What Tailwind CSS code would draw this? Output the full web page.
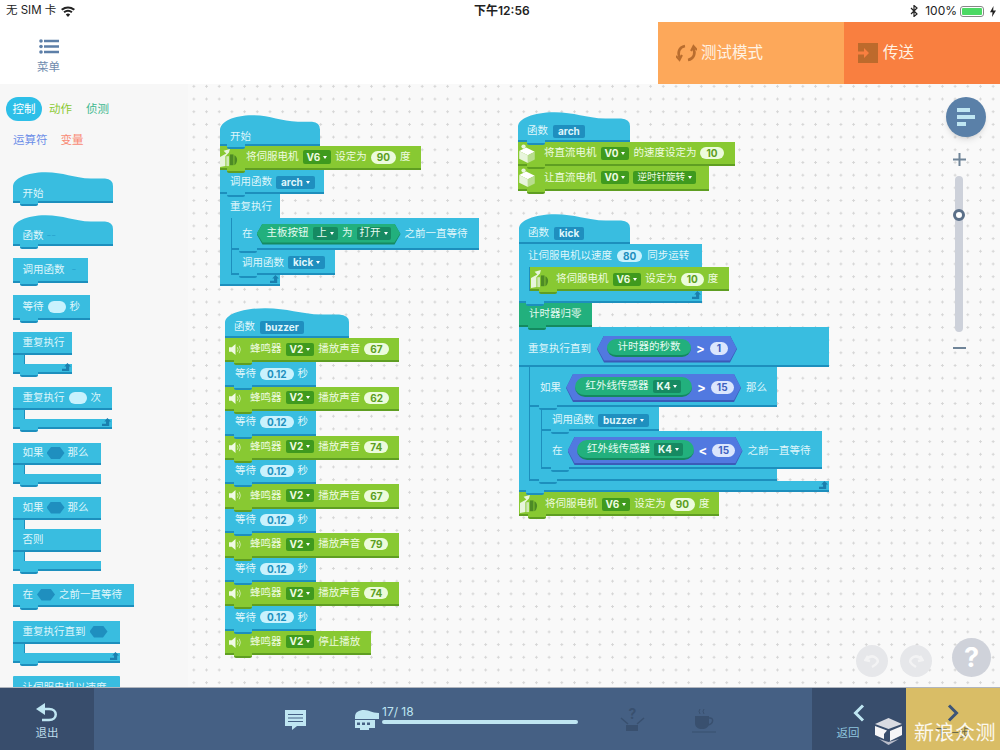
<!DOCTYPE html>
<html lang="zh-CN">
<head>
  <meta charset="UTF-8">
  <meta name="viewport" content="width=device-width, initial-scale=1.0">
  <script src="https://cdn.jsdelivr.net/npm/@tailwindcss/browser@4"></script>
  <title>积木编程</title>
</head>
<body class="relative flex h-[750px] w-[1000px] flex-col overflow-hidden bg-white font-['Inter','Noto_Sans_CJK_SC',sans-serif]">

  <!-- icon symbols -->
  <svg class="absolute h-0 w-0">
    <symbol id="hat" viewBox="0 0 100 30" preserveAspectRatio="none"><path d="M0 30V15C0 6 14 .5 32 .2C50 0 60 6 78 6.500H92Q100 7 100 14V30Z" fill="#39bde0"/></symbol>
    <symbol id="servo" viewBox="0 0 20 22"><path d="M0 10L7 6 4 3 11 1 10 5 6 9V20L0 21Z" fill="#e8f5dc"/><path d="M7 9h3v11H7z" fill="#cfe8b8"/><path d="M11 7h4v12h-4z" fill="#4d8a25"/><path d="M16 8c2 1 3 3 3 5s-1 5-3 6z" fill="#4d8a25"/></symbol>
    <symbol id="dc" viewBox="0 0 18 22"><circle cx="5" cy="3" r="2.500" fill="#e8f5dc"/><path d="M0 8L8 4 18 9 10 13Z" fill="#fff"/><path d="M0 8L10 13V22L0 17Z" fill="#e8f5dc"/><path d="M10 13L18 9V18L10 22Z" fill="#b8dd8e"/></symbol>
    <symbol id="speaker" viewBox="0 0 14 14"><path d="M0 4.500H3L7 1V13L3 9.500H0Z" fill="#f0fae4"/><path d="M9 4.500Q10.500 7 9 9.500M11 3Q13.500 7 11 11" fill="none" stroke="#d4edb6" stroke-width="1"/></symbol>
    <symbol id="loop" viewBox="0 0 10 10"><path d="M6 0L10 4H8V9H0V6.500H4.500V4H2.500Z" fill="#1a7fae"/></symbol>
  </svg>

  <!-- status bar -->
  <div class="relative flex h-[22px] shrink-0 items-center justify-between pl-[6px] pr-[4px] text-[12px] text-[#222]">
    <div class="flex items-center gap-[5px]">
      <span class="text-[11.500px]">无 SIM 卡</span>
      <svg width="14" height="11" viewBox="0 0 14 11"><path d="M7 11L4.800 8.400Q7 6.800 9.200 8.400ZM3.700 7.100L2.400 5.600Q7 2.100 11.600 5.600L10.300 7.100Q7 4.600 3.700 7.100ZM1.400 4.400L0 2.900Q7-2 14 2.900L12.600 4.400Q7 .6 1.400 4.400Z" fill="#222"/></svg>
    </div>
    <span class="absolute left-[474px] text-[12px] font-semibold">下午12:56</span>
    <div class="flex items-center gap-[3px]">
      <svg width="8" height="12" viewBox="0 0 8 12"><path d="M1 3L7 9 4 11.500V.5L7 3 1 9" fill="none" stroke="#222" stroke-width="1.200"/></svg>
      <span class="ml-[4px]">100%</span>
      <div class="flex h-[11px] w-[24px] rounded-[3px] border border-[#888] p-[1px]"><div class="flex-1 rounded-[1px] bg-[#4cd964]"></div></div>
      <svg width="6" height="11" viewBox="0 0 6 11" class="ml-[3px]"><path d="M3.500 0L0 6.200H2.500L2 11 6 4.500H3.200Z" fill="#222"/></svg>
    </div>
  </div>

  <!-- top bar -->
  <div class="flex h-[62px] shrink-0">
    <div class="flex w-[97px] flex-col items-center pt-[17px]">
      <svg width="20" height="15" viewBox="0 0 20 15" fill="#5d7fa8"><circle cx="2" cy="2" r="1.800"/><circle cx="2" cy="7.500" r="1.800"/><circle cx="2" cy="13" r="1.800"/><path d="M5 .8h15v2.400H5zM5 6.300h15v2.400H5zM5 11.800h15v2.400H5z"/></svg>
      <span class="mt-[5px] text-[11.500px] leading-[16px] text-[#6f8cae]">菜单</span>
    </div>
    <div class="ml-auto flex w-[186px] items-center gap-[4px] bg-[#fda85a] pl-[18px] text-[15.500px] text-[#fff3e4]">
      <svg width="21" height="18" viewBox="0 0 21 18" fill="none" stroke="#b96d2e" stroke-width="2.600"><path d="M4 14C1 9 3 3 9 2"/><path d="M6 11L3.500 16 0 12" stroke-width="2"/><path d="M17 4C20 9 18 15 12 16"/><path d="M15 7L17.500 2 21 6" stroke-width="2"/></svg>
      <span>测试模式</span>
    </div>
    <div class="flex w-[156px] items-center gap-[5px] bg-[#f97f40] pl-[14px] text-[15.500px] text-[#fff3e4]">
      <svg width="20" height="20" viewBox="0 0 20 20"><path d="M0 0h20v20H0z" fill="#bd6a2c"/><path d="M0 8.500h6V5l5 5-5 5v-3.500H0z" fill="#f97f40"/></svg>
      <span>传送</span>
    </div>
  </div>

  <!-- middle -->
  <div class="flex min-h-0 flex-1">

    <!-- palette -->
    <div class="h-full w-[188px] shrink-0 overflow-hidden bg-[#f7f7f7]">
      <div class="flex gap-[7px] pl-[6px] pt-[13px] text-[11.500px] leading-[24px]">
        <span class="h-[24px] w-[36px] rounded-full bg-[#2dbfe8] text-center text-white">控制</span>
        <span class="text-[#8bc933]">动作</span>
        <span class="ml-[7px] text-[#3cb88e]">侦测</span>
      </div>
      <div class="mt-[7px] flex gap-[13px] pl-[13px] text-[11.500px] leading-[24px]">
        <span class="text-[#6c8ee8]">运算符</span>
        <span class="text-[#f98a75]">变量</span>
      </div>

      <div class="mt-[20px] flex flex-col gap-[12px] pl-[12.500px] text-[10.500px] text-[#dff6fb]">
        <div class="relative h-[31px] w-[100px]">
          <svg class="absolute inset-0 h-[30px] w-full"><use href="#hat"/></svg>
          <div class="absolute inset-x-0 bottom-0 flex h-[20px] items-center border-b-2 border-[#1d8fbd] pl-[10px] pt-[3px]">开始<i class="absolute left-[7px] top-full z-10 h-[5px] w-[18px] rounded-b-[2px] border-b-2 border-[#1d8fbd] bg-[#39bde0]"></i></div>
        </div>
        <div class="relative h-[31px] w-[100px]">
          <svg class="absolute inset-0 h-[30px] w-full"><use href="#hat"/></svg>
          <div class="absolute inset-x-0 bottom-0 flex h-[20px] items-center gap-[3px] border-b-2 border-[#1d8fbd] pl-[10px] pt-[2px]">函数<span class="text-[#2aa5cf]">--</span><i class="absolute left-[7px] top-full z-10 h-[5px] w-[18px] rounded-b-[2px] border-b-2 border-[#1d8fbd] bg-[#39bde0]"></i></div>
        </div>
        <div class="relative flex h-[25px] w-[75.500px] items-center gap-[7px] border-b-2 border-[#1d8fbd] bg-[#39bde0] pl-[10px]">调用函数<span class="text-[#2aa5cf]">-</span><i class="absolute left-[7px] top-full z-10 h-[5px] w-[18px] rounded-b-[2px] border-b-2 border-[#1d8fbd] bg-[#39bde0]"></i></div>
        <div class="relative flex h-[25px] w-[77px] items-center gap-[4px] border-b-2 border-[#1d8fbd] bg-[#39bde0] pl-[10px]">等待<i class="h-[12px] w-[18px] rounded-full bg-[#c9f2fd]"></i>秒<i class="absolute left-[7px] top-full z-10 h-[5px] w-[18px] rounded-b-[2px] border-b-2 border-[#1d8fbd] bg-[#39bde0]"></i></div>

        <div class="flex flex-col">
          <div class="relative flex h-[23px] w-[59.500px] items-center border-b-2 border-[#1d8fbd] bg-[#39bde0] pl-[10px]">重复执行</div>
          <div class="h-[9px] w-[12px] border-r border-[#1d8fbd] bg-[#39bde0]"></div>
          <div class="relative h-[10px] w-[59.500px] border-b-2 border-[#1d8fbd] bg-[#39bde0]"><svg class="absolute right-[1px] top-[-1px] h-[9px] w-[9px]"><use href="#loop"/></svg><i class="absolute left-[7px] top-full z-10 h-[5px] w-[18px] rounded-b-[2px] border-b-2 border-[#1d8fbd] bg-[#39bde0]"></i></div>
        </div>
        <div class="mt-[1px] flex flex-col">
          <div class="relative flex h-[23px] w-[99px] items-center gap-[4px] border-b-2 border-[#1d8fbd] bg-[#39bde0] pl-[10px]">重复执行<i class="h-[12px] w-[18px] rounded-full bg-[#c9f2fd]"></i>次</div>
          <div class="h-[9px] w-[12px] border-r border-[#1d8fbd] bg-[#39bde0]"></div>
          <div class="relative h-[10px] w-[99px] border-b-2 border-[#1d8fbd] bg-[#39bde0]"><svg class="absolute right-[1px] top-[-1px] h-[9px] w-[9px]"><use href="#loop"/></svg><i class="absolute left-[7px] top-full z-10 h-[5px] w-[18px] rounded-b-[2px] border-b-2 border-[#1d8fbd] bg-[#39bde0]"></i></div>
        </div>
        <div class="mt-[2px] flex flex-col">
          <div class="relative flex h-[22px] w-[88px] items-center gap-[3px] border-b-2 border-[#1d8fbd] bg-[#39bde0] pl-[10px]">如果<i class="h-[12px] w-[18px] bg-[#1f8fbf] [clip-path:polygon(25%_0,75%_0,100%_50%,75%_100%,25%_100%,0_50%)]"></i>那么</div>
          <div class="h-[9px] w-[12px] border-r border-[#1d8fbd] bg-[#39bde0]"></div>
          <div class="relative h-[10px] w-[88px] border-b-2 border-[#1d8fbd] bg-[#39bde0]"><i class="absolute left-[7px] top-full z-10 h-[5px] w-[18px] rounded-b-[2px] border-b-2 border-[#1d8fbd] bg-[#39bde0]"></i></div>
        </div>
        <div class="mt-[1px] flex flex-col">
          <div class="relative flex h-[23px] w-[88px] items-center gap-[3px] border-b-2 border-[#1d8fbd] bg-[#39bde0] pl-[10px]">如果<i class="h-[12px] w-[18px] bg-[#1f8fbf] [clip-path:polygon(25%_0,75%_0,100%_50%,75%_100%,25%_100%,0_50%)]"></i>那么</div>
          <div class="h-[9px] w-[12px] border-r border-[#1d8fbd] bg-[#39bde0]"></div>
          <div class="flex h-[23px] w-[88px] items-center border-b-2 border-[#1d8fbd] bg-[#39bde0] pl-[10px]">否则</div>
          <div class="h-[9px] w-[12px] border-r border-[#1d8fbd] bg-[#39bde0]"></div>
          <div class="relative h-[10px] w-[88px] border-b-2 border-[#1d8fbd] bg-[#39bde0]"><i class="absolute left-[7px] top-full z-10 h-[5px] w-[18px] rounded-b-[2px] border-b-2 border-[#1d8fbd] bg-[#39bde0]"></i></div>
        </div>
        <div class="relative mt-[1px] flex h-[23px] w-[121px] items-center gap-[4px] border-b-2 border-[#1d8fbd] bg-[#39bde0] pl-[10px]">在<i class="h-[12px] w-[18px] bg-[#1f8fbf] [clip-path:polygon(25%_0,75%_0,100%_50%,75%_100%,25%_100%,0_50%)]"></i>之前一直等待<i class="absolute left-[7px] top-full z-10 h-[5px] w-[18px] rounded-b-[2px] border-b-2 border-[#1d8fbd] bg-[#39bde0]"></i></div>
        <div class="mt-[2px] flex flex-col">
          <div class="relative flex h-[23px] w-[107px] items-center gap-[4px] border-b-2 border-[#1d8fbd] bg-[#39bde0] pl-[10px]">重复执行直到<i class="h-[12px] w-[18px] bg-[#1f8fbf] [clip-path:polygon(25%_0,75%_0,100%_50%,75%_100%,25%_100%,0_50%)]"></i></div>
          <div class="h-[9px] w-[12px] border-r border-[#1d8fbd] bg-[#39bde0]"></div>
          <div class="relative h-[10px] w-[107px] border-b-2 border-[#1d8fbd] bg-[#39bde0]"><svg class="absolute right-[1px] top-[-1px] h-[9px] w-[9px]"><use href="#loop"/></svg><i class="absolute left-[7px] top-full z-10 h-[5px] w-[18px] rounded-b-[2px] border-b-2 border-[#1d8fbd] bg-[#39bde0]"></i></div>
        </div>
        <div class="mt-[1px] flex h-[24px] w-[107px] items-center rounded-t-[1px] bg-[#39bde0] pl-[10px]">让伺服电机以速度</div>
      </div>
    </div>

    <!-- canvas -->
    <div class="relative flex-1 overflow-hidden bg-[#f9f9f9] bg-[radial-gradient(#d6d6d6_1px,transparent_1.200px)] bg-[size:12.700px_12.700px] bg-[position:-0.500px_-4px] text-[10.500px]">

      <!-- stack: 开始 -->
      <div class="absolute left-[32px] top-[31px] flex flex-col text-[#dff6fb]">
        <div class="relative h-[31px] w-[100px]">
          <svg class="absolute inset-0 h-[31px] w-full"><use href="#hat"/></svg>
          <div class="absolute inset-x-0 bottom-0 flex h-[20px] items-center border-b-2 border-[#1d8fbd] pl-[10px] pt-[3px]">开始<i class="absolute left-[7px] top-full z-10 h-[5px] w-[18px] rounded-b-[2px] border-b-2 border-[#1d8fbd] bg-[#39bde0]"></i></div>
        </div>
        <div class="relative flex h-[24px] w-[201px] items-center gap-[4px] border-b-2 border-[#5f9e22] bg-[#88c932] pl-[26px] text-[#eefbe0]">
          <svg class="absolute left-0 top-[2px] h-[20px] w-[18px]"><use href="#servo"/></svg>将伺服电机<span class="flex h-[14px] items-center gap-[3px] rounded-[2px] bg-[#3f9a1e] px-[4px] text-[10px] font-bold">V6<i class="h-0 w-0 border-x-[2px] border-t-[3px] border-x-transparent border-t-white"></i></span>设定为<span class="h-[13px] rounded-full bg-[#ecfbdc] px-[6px] text-[10px] font-bold leading-[13px] text-[#5c9e22]">90</span>度<i class="absolute left-[7px] top-full z-10 h-[5px] w-[18px] rounded-b-[2px] border-b-2 border-[#5f9e22] bg-[#88c932]"></i>
        </div>
        <div class="relative flex h-[24px] w-[104px] items-center gap-[4px] border-b-2 border-[#1d8fbd] bg-[#39bde0] pl-[10px] pt-[2px]">调用函数<span class="flex h-[13px] items-center gap-[3px] rounded-[2px] bg-[#1f8fbf] px-[5px] text-[10px] font-bold">arch<i class="h-0 w-0 border-x-[2px] border-t-[3px] border-x-transparent border-t-white"></i></span><i class="absolute left-[7px] top-full z-10 h-[5px] w-[18px] rounded-b-[2px] border-b-2 border-[#1d8fbd] bg-[#39bde0]"></i></div>
        <div class="relative flex h-[24px] w-[60px] items-center border-b-2 border-[#39bde0] bg-[#39bde0] pl-[10px] pt-[4px]">重复执行</div>
        <div class="flex">
          <div class="w-[12px] border-r border-[#1d8fbd] bg-[#39bde0]"></div>
          <div class="flex flex-col">
            <div class="relative flex h-[32px] w-[247px] items-center gap-[4px] border-b-2 border-[#1d8fbd] bg-[#39bde0] pl-[10px] pt-[2px]">在
              <div class="h-[21px] w-[144px] bg-[#158a62] [clip-path:polygon(6px_0,calc(100%-6px)_0,100%_50%,calc(100%-6px)_100%,6px_100%,0_50%)]">
                <div class="flex h-[19px] items-center gap-[4px] bg-[#22b07d] pl-[10px] text-[#e6fbf2] [clip-path:polygon(6px_0,calc(100%-6px)_0,100%_50%,calc(100%-6px)_100%,6px_100%,0_50%)]">主板按钮<span class="flex h-[13px] items-center gap-[3px] rounded-[2px] bg-[#168a62] px-[4px]">上<i class="h-0 w-0 border-x-[2px] border-t-[3px] border-x-transparent border-t-white"></i></span>为<span class="flex h-[13px] items-center gap-[3px] rounded-[2px] bg-[#168a62] px-[3px]">打开<i class="h-0 w-0 border-x-[2px] border-t-[3px] border-x-transparent border-t-white"></i></span></div>
              </div>
              之前一直等待<i class="absolute left-[7px] top-full z-10 h-[5px] w-[18px] rounded-b-[2px] border-b-2 border-[#1d8fbd] bg-[#39bde0]"></i>
            </div>
            <div class="relative flex h-[25px] w-[103px] items-center gap-[4px] border-b-2 border-[#1d8fbd] bg-[#39bde0] pl-[10px] pt-[2px]">调用函数<span class="flex h-[13px] items-center gap-[3px] rounded-[2px] bg-[#1f8fbf] px-[5px] text-[10px] font-bold">kick<i class="h-0 w-0 border-x-[2px] border-t-[3px] border-x-transparent border-t-white"></i></span><i class="absolute left-[7px] top-full z-10 h-[5px] w-[18px] rounded-b-[2px] border-b-2 border-[#1d8fbd] bg-[#39bde0]"></i></div>
          </div>
        </div>
        <div class="relative h-[11px] w-[60px] border-b-2 border-[#1d8fbd] bg-[#39bde0]"><svg class="absolute right-[1px] top-0 h-[9px] w-[9px]"><use href="#loop"/></svg></div>
      </div>

      <!-- stack: buzzer -->
      <div class="absolute left-[37px] top-[224px] flex flex-col text-[#dff6fb]">
        <div class="relative h-[30px] w-[124px]">
          <svg class="absolute inset-0 h-[30px] w-full"><use href="#hat"/></svg>
          <div class="absolute inset-x-0 bottom-0 flex h-[20px] items-center gap-[5px] border-b-2 border-[#1d8fbd] pl-[9px]">函数<span class="flex h-[13px] items-center rounded-[2px] bg-[#1f8fbf] px-[5px] text-[10px] font-bold">buzzer</span></div>
        </div>
        <div class="relative flex h-[24.400px] w-[174px] items-center gap-[4px] border-b-2 border-[#5f9e22] bg-[#88c932] pl-[25px] text-[#eefbe0]"><svg class="absolute left-[4px] top-[5px] h-[13px] w-[13px]"><use href="#speaker"/></svg>蜂鸣器<span class="flex h-[13px] items-center gap-[3px] rounded-[2px] bg-[#3f9a1e] px-[4px] text-[10px] font-bold">V2<i class="h-0 w-0 border-x-[2px] border-t-[3px] border-x-transparent border-t-white"></i></span>播放声音<span class="h-[12px] rounded-full bg-[#ecfbdc] px-[6px] text-[10px] font-bold leading-[12px] text-[#5c9e22]">67</span><i class="absolute left-[9px] top-full z-10 h-[5px] w-[18px] rounded-b-[2px] border-b-2 border-[#5f9e22] bg-[#88c932]"></i></div>
        <div class="relative flex h-[24.400px] w-[91px] items-center gap-[4px] border-b-2 border-[#1d8fbd] bg-[#39bde0] pl-[10px]">等待<span class="h-[12px] rounded-full bg-[#c9f2fd] px-[7px] text-[10px] font-bold leading-[12px] text-[#1d8fbd]">0.12</span>秒<i class="absolute left-[9px] top-full z-10 h-[5px] w-[18px] rounded-b-[2px] border-b-2 border-[#1d8fbd] bg-[#39bde0]"></i></div>
        <div class="relative flex h-[24.400px] w-[174px] items-center gap-[4px] border-b-2 border-[#5f9e22] bg-[#88c932] pl-[25px] text-[#eefbe0]"><svg class="absolute left-[4px] top-[5px] h-[13px] w-[13px]"><use href="#speaker"/></svg>蜂鸣器<span class="flex h-[13px] items-center gap-[3px] rounded-[2px] bg-[#3f9a1e] px-[4px] text-[10px] font-bold">V2<i class="h-0 w-0 border-x-[2px] border-t-[3px] border-x-transparent border-t-white"></i></span>播放声音<span class="h-[12px] rounded-full bg-[#ecfbdc] px-[6px] text-[10px] font-bold leading-[12px] text-[#5c9e22]">62</span><i class="absolute left-[9px] top-full z-10 h-[5px] w-[18px] rounded-b-[2px] border-b-2 border-[#5f9e22] bg-[#88c932]"></i></div>
        <div class="relative flex h-[24.400px] w-[91px] items-center gap-[4px] border-b-2 border-[#1d8fbd] bg-[#39bde0] pl-[10px]">等待<span class="h-[12px] rounded-full bg-[#c9f2fd] px-[7px] text-[10px] font-bold leading-[12px] text-[#1d8fbd]">0.12</span>秒<i class="absolute left-[9px] top-full z-10 h-[5px] w-[18px] rounded-b-[2px] border-b-2 border-[#1d8fbd] bg-[#39bde0]"></i></div>
        <div class="relative flex h-[24.400px] w-[174px] items-center gap-[4px] border-b-2 border-[#5f9e22] bg-[#88c932] pl-[25px] text-[#eefbe0]"><svg class="absolute left-[4px] top-[5px] h-[13px] w-[13px]"><use href="#speaker"/></svg>蜂鸣器<span class="flex h-[13px] items-center gap-[3px] rounded-[2px] bg-[#3f9a1e] px-[4px] text-[10px] font-bold">V2<i class="h-0 w-0 border-x-[2px] border-t-[3px] border-x-transparent border-t-white"></i></span>播放声音<span class="h-[12px] rounded-full bg-[#ecfbdc] px-[6px] text-[10px] font-bold leading-[12px] text-[#5c9e22]">74</span><i class="absolute left-[9px] top-full z-10 h-[5px] w-[18px] rounded-b-[2px] border-b-2 border-[#5f9e22] bg-[#88c932]"></i></div>
        <div class="relative flex h-[24.400px] w-[91px] items-center gap-[4px] border-b-2 border-[#1d8fbd] bg-[#39bde0] pl-[10px]">等待<span class="h-[12px] rounded-full bg-[#c9f2fd] px-[7px] text-[10px] font-bold leading-[12px] text-[#1d8fbd]">0.12</span>秒<i class="absolute left-[9px] top-full z-10 h-[5px] w-[18px] rounded-b-[2px] border-b-2 border-[#1d8fbd] bg-[#39bde0]"></i></div>
        <div class="relative flex h-[24.400px] w-[174px] items-center gap-[4px] border-b-2 border-[#5f9e22] bg-[#88c932] pl-[25px] text-[#eefbe0]"><svg class="absolute left-[4px] top-[5px] h-[13px] w-[13px]"><use href="#speaker"/></svg>蜂鸣器<span class="flex h-[13px] items-center gap-[3px] rounded-[2px] bg-[#3f9a1e] px-[4px] text-[10px] font-bold">V2<i class="h-0 w-0 border-x-[2px] border-t-[3px] border-x-transparent border-t-white"></i></span>播放声音<span class="h-[12px] rounded-full bg-[#ecfbdc] px-[6px] text-[10px] font-bold leading-[12px] text-[#5c9e22]">67</span><i class="absolute left-[9px] top-full z-10 h-[5px] w-[18px] rounded-b-[2px] border-b-2 border-[#5f9e22] bg-[#88c932]"></i></div>
        <div class="relative flex h-[24.400px] w-[91px] items-center gap-[4px] border-b-2 border-[#1d8fbd] bg-[#39bde0] pl-[10px]">等待<span class="h-[12px] rounded-full bg-[#c9f2fd] px-[7px] text-[10px] font-bold leading-[12px] text-[#1d8fbd]">0.12</span>秒<i class="absolute left-[9px] top-full z-10 h-[5px] w-[18px] rounded-b-[2px] border-b-2 border-[#1d8fbd] bg-[#39bde0]"></i></div>
        <div class="relative flex h-[24.400px] w-[174px] items-center gap-[4px] border-b-2 border-[#5f9e22] bg-[#88c932] pl-[25px] text-[#eefbe0]"><svg class="absolute left-[4px] top-[5px] h-[13px] w-[13px]"><use href="#speaker"/></svg>蜂鸣器<span class="flex h-[13px] items-center gap-[3px] rounded-[2px] bg-[#3f9a1e] px-[4px] text-[10px] font-bold">V2<i class="h-0 w-0 border-x-[2px] border-t-[3px] border-x-transparent border-t-white"></i></span>播放声音<span class="h-[12px] rounded-full bg-[#ecfbdc] px-[6px] text-[10px] font-bold leading-[12px] text-[#5c9e22]">79</span><i class="absolute left-[9px] top-full z-10 h-[5px] w-[18px] rounded-b-[2px] border-b-2 border-[#5f9e22] bg-[#88c932]"></i></div>
        <div class="relative flex h-[24.400px] w-[91px] items-center gap-[4px] border-b-2 border-[#1d8fbd] bg-[#39bde0] pl-[10px]">等待<span class="h-[12px] rounded-full bg-[#c9f2fd] px-[7px] text-[10px] font-bold leading-[12px] text-[#1d8fbd]">0.12</span>秒<i class="absolute left-[9px] top-full z-10 h-[5px] w-[18px] rounded-b-[2px] border-b-2 border-[#1d8fbd] bg-[#39bde0]"></i></div>
        <div class="relative flex h-[24.400px] w-[174px] items-center gap-[4px] border-b-2 border-[#5f9e22] bg-[#88c932] pl-[25px] text-[#eefbe0]"><svg class="absolute left-[4px] top-[5px] h-[13px] w-[13px]"><use href="#speaker"/></svg>蜂鸣器<span class="flex h-[13px] items-center gap-[3px] rounded-[2px] bg-[#3f9a1e] px-[4px] text-[10px] font-bold">V2<i class="h-0 w-0 border-x-[2px] border-t-[3px] border-x-transparent border-t-white"></i></span>播放声音<span class="h-[12px] rounded-full bg-[#ecfbdc] px-[6px] text-[10px] font-bold leading-[12px] text-[#5c9e22]">74</span><i class="absolute left-[9px] top-full z-10 h-[5px] w-[18px] rounded-b-[2px] border-b-2 border-[#5f9e22] bg-[#88c932]"></i></div>
        <div class="relative flex h-[24.400px] w-[91px] items-center gap-[4px] border-b-2 border-[#1d8fbd] bg-[#39bde0] pl-[10px]">等待<span class="h-[12px] rounded-full bg-[#c9f2fd] px-[7px] text-[10px] font-bold leading-[12px] text-[#1d8fbd]">0.12</span>秒<i class="absolute left-[9px] top-full z-10 h-[5px] w-[18px] rounded-b-[2px] border-b-2 border-[#1d8fbd] bg-[#39bde0]"></i></div>
        <div class="relative flex h-[24.400px] w-[146px] items-center gap-[4px] border-b-2 border-[#5f9e22] bg-[#88c932] pl-[25px] text-[#eefbe0]"><svg class="absolute left-[4px] top-[5px] h-[13px] w-[13px]"><use href="#speaker"/></svg>蜂鸣器<span class="flex h-[13px] items-center gap-[3px] rounded-[2px] bg-[#3f9a1e] px-[4px] text-[10px] font-bold">V2<i class="h-0 w-0 border-x-[2px] border-t-[3px] border-x-transparent border-t-white"></i></span>停止播放<i class="absolute left-[9px] top-full z-10 h-[5px] w-[18px] rounded-b-[2px] border-b-2 border-[#5f9e22] bg-[#88c932]"></i></div>
      </div>

      <!-- stack: arch -->
      <div class="absolute left-[330px] top-[28px] flex flex-col text-[#dff6fb]">
        <div class="relative h-[30px] w-[112px]">
          <svg class="absolute inset-0 h-[30px] w-full"><use href="#hat"/></svg>
          <div class="absolute inset-x-0 bottom-0 flex h-[20px] items-center gap-[5px] border-b-2 border-[#1d8fbd] pl-[9px]">函数<span class="flex h-[13px] items-center rounded-[2px] bg-[#1f8fbf] px-[5px] text-[10px] font-bold">arch</span><i class="absolute left-[9px] top-full z-10 h-[5px] w-[18px] rounded-b-[2px] border-b-2 border-[#1d8fbd] bg-[#39bde0]"></i></div>
        </div>
        <div class="relative flex h-[24.400px] w-[217px] items-center gap-[4px] border-b-2 border-[#5f9e22] bg-[#88c932] pl-[26px] text-[#eefbe0]"><svg class="absolute left-0 top-[2px] h-[19px] w-[18px]"><use href="#dc"/></svg>将直流电机<span class="flex h-[13px] items-center gap-[3px] rounded-[2px] bg-[#3f9a1e] px-[4px] text-[10px] font-bold">V0<i class="h-0 w-0 border-x-[2px] border-t-[3px] border-x-transparent border-t-white"></i></span>的速度设定为<span class="h-[12px] rounded-full bg-[#ecfbdc] px-[6px] text-[10px] font-bold leading-[12px] text-[#5c9e22]">10</span><i class="absolute left-[9px] top-full z-10 h-[5px] w-[18px] rounded-b-[2px] border-b-2 border-[#5f9e22] bg-[#88c932]"></i></div>
        <div class="relative flex h-[24.400px] w-[191px] items-center gap-[4px] border-b-2 border-[#5f9e22] bg-[#88c932] pl-[26px] text-[#eefbe0]"><svg class="absolute left-0 top-[2px] h-[19px] w-[18px]"><use href="#dc"/></svg>让直流电机<span class="flex h-[13px] items-center gap-[3px] rounded-[2px] bg-[#3f9a1e] px-[4px] text-[10px] font-bold">V0<i class="h-0 w-0 border-x-[2px] border-t-[3px] border-x-transparent border-t-white"></i></span><span class="flex h-[13px] items-center gap-[3px] rounded-[2px] bg-[#3f9a1e] px-[4px] text-[9.500px]">逆时针旋转<i class="h-0 w-0 border-x-[2px] border-t-[3px] border-x-transparent border-t-white"></i></span><i class="absolute left-[9px] top-full z-10 h-[5px] w-[18px] rounded-b-[2px] border-b-2 border-[#5f9e22] bg-[#88c932]"></i></div>
      </div>

      <!-- stack: kick -->
      <div class="absolute left-[331px] top-[130px] flex flex-col text-[#dff6fb]">
        <div class="relative h-[30px] w-[111px]">
          <svg class="absolute inset-0 h-[30px] w-full"><use href="#hat"/></svg>
          <div class="absolute inset-x-0 bottom-0 flex h-[20px] items-center gap-[5px] border-b-2 border-[#1d8fbd] pl-[9px]">函数<span class="flex h-[13px] items-center rounded-[2px] bg-[#1f8fbf] px-[5px] text-[10px] font-bold">kick</span></div>
        </div>
        <div class="relative flex h-[23px] w-[183px] items-center gap-[5px] bg-[#39bde0] pl-[9px]">让伺服电机以速度<span class="h-[12px] rounded-full bg-[#c9f2fd] px-[6px] text-[10px] font-bold leading-[12px] text-[#1d8fbd]">80</span>同步运转</div>
        <div class="flex">
          <div class="w-[11px] border-r border-[#1d8fbd] bg-[#39bde0]"></div>
          <div class="relative flex h-[24px] w-[199px] items-center gap-[4px] border-b-2 border-[#5f9e22] bg-[#88c932] pl-[26px] pt-[2px] text-[#eefbe0]"><svg class="absolute left-[1px] top-[2px] h-[20px] w-[18px]"><use href="#servo"/></svg>将伺服电机<span class="flex h-[13px] items-center gap-[3px] rounded-[2px] bg-[#3f9a1e] px-[4px] text-[10px] font-bold">V6<i class="h-0 w-0 border-x-[2px] border-t-[3px] border-x-transparent border-t-white"></i></span>设定为<span class="h-[13px] rounded-full bg-[#ecfbdc] px-[6px] text-[10px] font-bold leading-[13px] text-[#5c9e22]">10</span>度<i class="absolute left-[9px] top-full z-10 h-[5px] w-[18px] rounded-b-[2px] border-b-2 border-[#5f9e22] bg-[#88c932]"></i></div>
        </div>
        <div class="relative h-[12px] w-[183px] border-b-2 border-[#1d8fbd] bg-[#39bde0]"><svg class="absolute right-[1px] top-0 h-[9px] w-[9px]"><use href="#loop"/></svg><i class="absolute left-[7px] top-full z-10 h-[5px] w-[18px] rounded-b-[2px] border-b-2 border-[#1d8fbd] bg-[#39bde0]"></i></div>
        <div class="relative flex h-[24px] w-[73px] items-center border-b-2 border-[#14895f] bg-[#22b07d] pl-[10px] text-[#e6fbf2]">计时器归零<i class="absolute left-[9px] top-full z-10 h-[5px] w-[18px] rounded-b-[2px] border-b-2 border-[#14895f] bg-[#22b07d]"></i></div>
        <div class="relative flex h-[40px] w-[310px] items-center gap-[6px] border-b-2 border-[#1d8fbd] bg-[#39bde0] pl-[9px] pt-[6px]">重复执行直到
          <div class="h-[27px] w-[140px] bg-[#3b5bb8] [clip-path:polygon(7px_0,calc(100%-7px)_0,100%_50%,calc(100%-7px)_100%,7px_100%,0_50%)]">
            <div class="flex h-[25px] items-center gap-[5px] bg-[#5179e0] pl-[10px] [clip-path:polygon(7px_0,calc(100%-7px)_0,100%_50%,calc(100%-7px)_100%,7px_100%,0_50%)]">
              <span class="flex h-[18px] w-[84px] items-center justify-center rounded-full border-b-2 border-[#14895f] bg-[#22b07d] text-[#e6fbf2]">计时器的秒数</span><span class="text-[13px] font-bold leading-none text-white">&gt;</span><span class="h-[13px] rounded-full bg-[#dbe6fd] px-[7px] text-[10px] font-bold leading-[13px] text-[#3d5fc0]">1</span>
            </div>
          </div>
        </div>
        <div class="flex">
          <div class="w-[11px] border-r border-[#1d8fbd] bg-[#39bde0]"></div>
          <div class="flex flex-col">
            <div class="relative flex h-[40px] w-[247px] items-center gap-[5px] border-b-2 border-[#1d8fbd] bg-[#39bde0] pl-[10px] pt-[4px]">如果
              <div class="h-[28px] w-[175px] bg-[#3b5bb8] [clip-path:polygon(7px_0,calc(100%-7px)_0,100%_50%,calc(100%-7px)_100%,7px_100%,0_50%)]">
                <div class="flex h-[26px] items-center gap-[5px] bg-[#5179e0] pl-[9px] [clip-path:polygon(7px_0,calc(100%-7px)_0,100%_50%,calc(100%-7px)_100%,7px_100%,0_50%)]">
                  <span class="flex h-[20px] w-[117px] items-center justify-center gap-[4px] rounded-full border-b-2 border-[#14895f] bg-[#22b07d] text-[#e6fbf2]">红外线传感器<span class="flex h-[13px] items-center gap-[3px] rounded-[2px] bg-[#168a62] px-[4px] text-[10px] font-bold">K4<i class="h-0 w-0 border-x-[2px] border-t-[3px] border-x-transparent border-t-white"></i></span></span><span class="text-[13px] font-bold leading-none text-white">&gt;</span><span class="h-[13px] rounded-full bg-[#dbe6fd] px-[6px] text-[10px] font-bold leading-[13px] text-[#3d5fc0]">15</span>
                </div>
              </div>
              那么<i class="absolute left-[9px] top-full z-10 h-[5px] w-[18px] rounded-b-[2px] border-b-2 border-[#1d8fbd] bg-[#39bde0]"></i>
            </div>
            <div class="flex">
              <div class="w-[12px] border-r border-[#1d8fbd] bg-[#39bde0]"></div>
              <div class="flex flex-col">
                <div class="relative flex h-[24px] w-[117px] items-center gap-[4px] border-b-2 border-[#1d8fbd] bg-[#39bde0] pl-[10px] pt-[4px]">调用函数<span class="flex h-[13px] items-center gap-[3px] rounded-[2px] bg-[#1f8fbf] px-[5px] text-[10px] font-bold">buzzer<i class="h-0 w-0 border-x-[2px] border-t-[3px] border-x-transparent border-t-white"></i></span><i class="absolute left-[9px] top-full z-10 h-[5px] w-[18px] rounded-b-[2px] border-b-2 border-[#1d8fbd] bg-[#39bde0]"></i></div>
                <div class="relative flex h-[38px] w-[280px] items-center gap-[5px] border-b-2 border-[#1d8fbd] bg-[#39bde0] pl-[10px] pt-[4px]">在
                  <div class="h-[28px] w-[175px] bg-[#3b5bb8] [clip-path:polygon(7px_0,calc(100%-7px)_0,100%_50%,calc(100%-7px)_100%,7px_100%,0_50%)]">
                    <div class="flex h-[26px] items-center gap-[5px] bg-[#5179e0] pl-[9px] [clip-path:polygon(7px_0,calc(100%-7px)_0,100%_50%,calc(100%-7px)_100%,7px_100%,0_50%)]">
                      <span class="flex h-[20px] w-[117px] items-center justify-center gap-[4px] rounded-full border-b-2 border-[#14895f] bg-[#22b07d] text-[#e6fbf2]">红外线传感器<span class="flex h-[13px] items-center gap-[3px] rounded-[2px] bg-[#168a62] px-[4px] text-[10px] font-bold">K4<i class="h-0 w-0 border-x-[2px] border-t-[3px] border-x-transparent border-t-white"></i></span></span><span class="text-[13px] font-bold leading-none text-white">&lt;</span><span class="h-[13px] rounded-full bg-[#dbe6fd] px-[6px] text-[10px] font-bold leading-[13px] text-[#3d5fc0]">15</span>
                    </div>
                  </div>
                  之前一直等待<i class="absolute left-[9px] top-full z-10 h-[5px] w-[18px] rounded-b-[2px] border-b-2 border-[#1d8fbd] bg-[#39bde0]"></i>
                </div>
              </div>
            </div>
            <div class="relative h-[12px] w-[247px] border-b-2 border-[#1d8fbd] bg-[#39bde0]"><i class="absolute left-[9px] top-full z-10 h-[5px] w-[18px] rounded-b-[2px] border-b-2 border-[#1d8fbd] bg-[#39bde0]"></i></div>
          </div>
        </div>
        <div class="relative h-[11px] w-[310px] border-b-2 border-[#1d8fbd] bg-[#39bde0]"><svg class="absolute right-[1px] top-0 h-[9px] w-[9px]"><use href="#loop"/></svg><i class="absolute left-[7px] top-full z-10 h-[5px] w-[18px] rounded-b-[2px] border-b-2 border-[#1d8fbd] bg-[#39bde0]"></i></div>
        <div class="relative flex h-[24px] w-[200px] items-center gap-[4px] border-b-2 border-[#5f9e22] bg-[#88c932] pl-[26px] pt-[2px] text-[#eefbe0]"><svg class="absolute left-[1px] top-[2px] h-[20px] w-[18px]"><use href="#servo"/></svg>将伺服电机<span class="flex h-[13px] items-center gap-[3px] rounded-[2px] bg-[#3f9a1e] px-[4px] text-[10px] font-bold">V6<i class="h-0 w-0 border-x-[2px] border-t-[3px] border-x-transparent border-t-white"></i></span>设定为<span class="h-[13px] rounded-full bg-[#ecfbdc] px-[6px] text-[10px] font-bold leading-[13px] text-[#5c9e22]">90</span>度<i class="absolute left-[9px] top-full z-10 h-[5px] w-[18px] rounded-b-[2px] border-b-2 border-[#5f9e22] bg-[#88c932]"></i></div>
      </div>

      <!-- zoom control -->
      <div class="absolute left-[758px] top-[13px] flex h-[40px] w-[40px] flex-col items-start justify-center gap-[3px] rounded-full bg-[#5a80a8] pl-[11px] shadow-md">
        <i class="h-[4px] w-[13px] bg-[#bfe6f2]"></i>
        <i class="h-[4px] w-[18px] bg-[#bfe6f2]"></i>
        <i class="h-[4px] w-[9px] bg-[#bfe6f2]"></i>
      </div>
      <div class="absolute left-[764px] top-[69px] flex w-[14px] flex-col items-center">
        <svg width="13" height="13" viewBox="0 0 13 13"><path d="M5.500 0h2v5.500H13v2H7.500V13h-2V7.500H0v-2h5.500z" fill="#6f8498"/></svg>
        <div class="relative mt-[10px] h-[156px] w-[8px] rounded-full bg-[#cdd1da]">
          <i class="absolute left-[-2px] top-[33px] h-[12px] w-[12px] rounded-full border-[3px] border-[#5a6f88] bg-white"></i>
        </div>
        <i class="mt-[15px] h-[2px] w-[13px] bg-[#6f8498]"></i>
      </div>

      <!-- undo, redo, help -->
      <div class="absolute left-[668px] top-[561px] flex items-start gap-[12px]">
        <div class="flex h-[32px] w-[32px] items-center justify-center rounded-full bg-[#e6e7ea]">
          <svg width="16" height="16" viewBox="0 0 16 16" fill="none" stroke="#f3f3f4" stroke-width="2.500"><path d="M4 3L1.500 7 6 8"/><path d="M2 7Q7 1 12 5T8 14"/></svg>
        </div>
        <div class="flex h-[32px] w-[32px] items-center justify-center rounded-full bg-[#e6e7ea]">
          <svg width="16" height="16" viewBox="0 0 16 16" fill="none" stroke="#f3f3f4" stroke-width="2.500"><path d="M12 3L14.500 7 10 8"/><path d="M14 7Q9 1 4 5T8 14"/></svg>
        </div>
        <div class="ml-[8px] mt-[-7px] flex h-[39px] w-[39px] items-center justify-center rounded-full bg-[#cfd2da] text-[27px] font-bold leading-none text-white">?</div>
      </div>
    </div>
  </div>

  <!-- bottom bar -->
  <div class="flex h-[63px] shrink-0 border-t border-[#b0b5bd] bg-[#456084] text-[#bfe6f2]">
    <div class="flex w-[94px] flex-col items-center bg-[#384d6c] pt-[15px]">
      <svg width="22" height="19" viewBox="0 0 22 19" fill="none"><path d="M0 6L9 0V12Z" fill="#bfe6f2"/><path d="M8 6H13C22 6 22 17 13 17H6" stroke="#bfe6f2" stroke-width="2.500"/></svg>
      <span class="mt-[3px] text-[11.500px] leading-[16px] text-[#bcdcea]">退出</span>
    </div>
    <div class="ml-[191px] mt-[22px]">
      <svg width="22" height="21" viewBox="0 0 22 21"><path d="M0 0H21V16H12L7 20V16H0Z" fill="#bfe6f2"/><path d="M3 4.500H18M3 8H18M3 11.500H18" stroke="#456084" stroke-width="1"/></svg>
    </div>
    <div class="ml-[48px] mt-[22px]">
      <svg width="24" height="20" viewBox="0 0 24 20"><path d="M0 7C0 2 4 0 9 0C15 0 16 3 24 3V9H0Z" fill="#bfe6f2"/><path d="M0 10H20V18H14V20H5V18H0Z" fill="#bfe6f2"/><path d="M2 12.500h3v2.500H2zM7 12.500h3v2.500H7zM12 12.500h3v2.500h-3z" fill="#456084"/></svg>
    </div>
    <div class="ml-[3px] mt-[16px] flex w-[196px] flex-col">
      <span class="text-[12px] leading-[15px]">17/ 18</span>
      <div class="mt-[1px] h-[4px] rounded-full bg-[#bfe6f2]"></div>
    </div>
    <div class="relative ml-[42px] mt-[21px] h-[23px] w-[25px]">
      <span class="absolute inset-x-0 top-[-3px] text-center text-[14px] font-bold leading-[16px] text-[#39506f]">?</span>
      <svg class="absolute inset-0" width="25" height="23" viewBox="0 0 25 23" fill="#39506f"><path d="M6 16h12v6H6z"/><path d="M1 9l7 6M24 9l-7 6" stroke="#39506f" stroke-width="1.500"/></svg>
    </div>
    <div class="ml-[47px] mt-[20px]">
      <svg width="25" height="25" viewBox="0 0 25 25" fill="#39506f"><path d="M3 8H17V15C17 19 14 21 10 21C6 21 3 19 3 15Z"/><path d="M17 10C22 9 22 16 16 17" fill="none" stroke="#39506f" stroke-width="1.500"/><path d="M0 23.500H24V24.500H0Z"/><path d="M8 1Q6 3 8 6M12 1Q10 3 12 6" fill="none" stroke="#39506f"/></svg>
    </div>
    <div class="ml-auto flex w-[94px] flex-col items-center bg-[#384d6c] pt-[16px]">
      <svg width="12" height="18" viewBox="0 0 12 18" fill="none"><path d="M10 1.500L2.500 9 10 16.500" stroke="#bfe6f2" stroke-width="3"/></svg>
      <span class="mr-[22px] mt-[3px] text-[11.500px] leading-[16px] text-[#8fc5de]">返回</span>
    </div>
    <div class="flex w-[94px] flex-col items-center bg-[#d9bd66] pt-[16px]">
      <svg width="12" height="18" viewBox="0 0 12 18" fill="none"><path d="M2 1.500L9.500 9 2 16.500" stroke="#3d5578" stroke-width="3"/></svg>
      <span class="mt-[3px] text-[11.500px] leading-[16px] text-[#6b6a4a]">下一步</span>
    </div>
  </div>

  <!-- watermark -->
  <svg class="absolute left-[875px] top-[718px]" width="27" height="27" viewBox="0 0 27 27"><path d="M13.500 0L27 6 13.500 11 0 6Z" fill="#d9dbe2"/><path d="M0 8L12 12.500 9 16V21L0 17Z" fill="#f5f5f7"/><path d="M27 8L15 13V23L27 17Z" fill="#f5f5f7"/><path d="M4 21L13.500 27 24 21 13.500 24Z" fill="#b9bdca"/></svg>
  <span class="absolute left-[914px] top-[719px] text-[20px] leading-[28px] tracking-[0.500px] text-white/90">新浪众测</span>
</body>
</html>
